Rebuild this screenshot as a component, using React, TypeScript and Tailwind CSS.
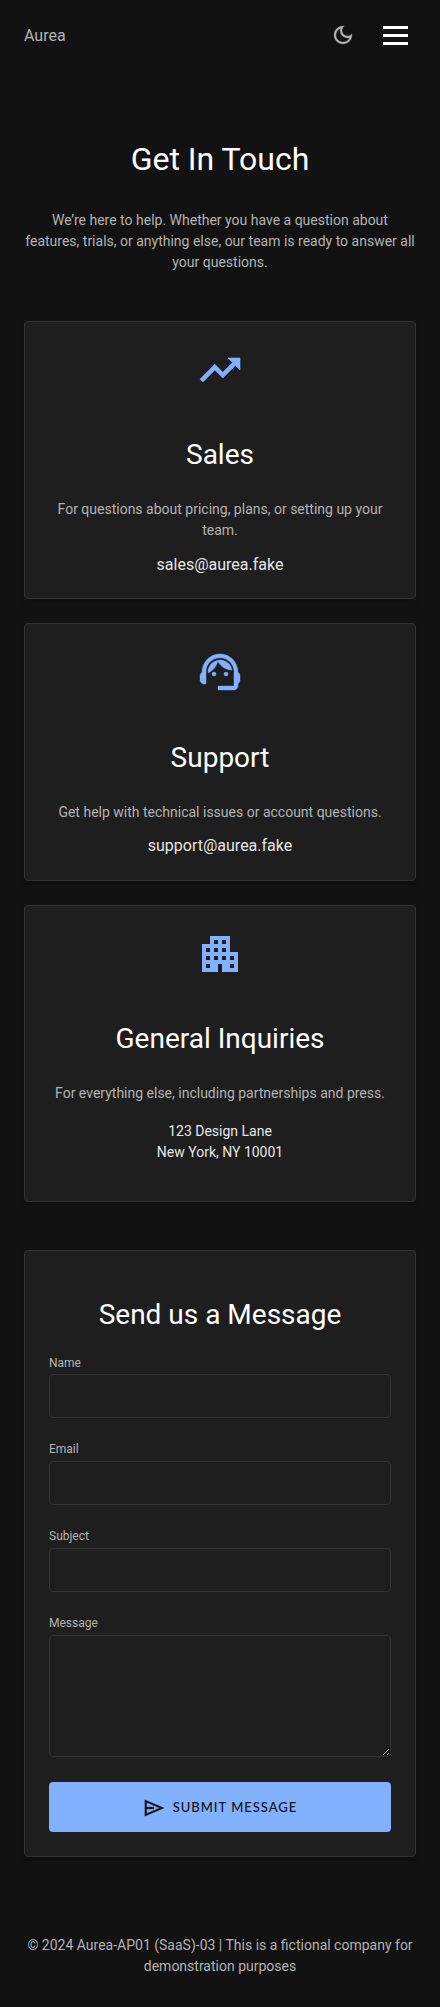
import React from "react";

const Icon = ({ size, className, bold, children }: { size: number; className?: string; bold?: number; children: React.ReactNode }) => (
  <svg
    width={size}
    height={size}
    viewBox="0 0 24 24"
    fill="currentColor"
    stroke={bold ? "currentColor" : "none"}
    strokeWidth={bold ?? 0}
    className={className}
  >
    {children}
  </svg>
);

const cardClass =
  "rounded border border-[#333333] bg-[#1e1e1e] shadow-[0_3px_6px_rgba(0,0,0,0.25)]";

function Field({ label, area }: { label: string; area?: boolean }) {
  return (
    <div className="flex flex-col">
      <label className={`text-[12px] leading-[14.5px] text-[#b3b3b3] ${area ? "mb-[5px]" : "mb-[4px]"}`}>{label}</label>
      {area ? (
        <textarea className="block h-[121.75px] w-full rounded border border-[#333333] bg-[#1e1e1e] outline-none" />
      ) : (
        <input className="block h-[44px] w-full rounded border border-[#333333] bg-[#1e1e1e] outline-none" />
      )}
    </div>
  );
}

export default function App() {
  return (
    <div className="min-h-[2007px] bg-[#121212] font-['Roboto',sans-serif] text-white">
      <header className="flex h-[70px] items-center justify-between px-6">
        <span className="text-[16px] leading-[21px] text-[#b3b3b3]">Aurea</span>
        <div className="flex items-center">
          <Icon size={24} bold={0.2} className="text-[#b3b3b3]">
            <path d="M9.37 5.51c-.18.64-.27 1.31-.27 1.99 0 4.08 3.32 7.4 7.4 7.4.68 0 1.35-.09 1.99-.27C17.45 17.19 14.93 19 12 19c-3.86 0-7-3.14-7-7 0-2.93 1.81-5.45 4.37-6.49zM12 3c-4.97 0-9 4.03-9 9s4.03 9 9 9 9-4.03 9-9c0-.46-.04-.92-.1-1.36-.98 1.37-2.58 2.26-4.4 2.26-2.98 0-5.4-2.42-5.4-5.4 0-1.81.89-3.42 2.26-4.4-.44-.06-.9-.1-1.36-.1z" />
          </Icon>
          <div className="ml-7 mr-2 flex w-[25px] flex-col gap-[5px]">
            <div className="h-[3px] bg-white" />
            <div className="h-[3px] bg-white" />
            <div className="h-[3px] bg-white" />
          </div>
        </div>
      </header>

      <main className="px-6">
        <h1 className="mt-[70px] text-center text-[32px] leading-[38px] font-normal">Get In Touch</h1>
        <p className="mt-[32px] text-center text-[14px] leading-[21px] text-[#b3b3b3]">
          We’re here to help. Whether you have a question about features, trials, or anything else, our team is ready to answer all your questions.
        </p>

        <div className="mt-[48px] flex flex-col gap-6">
          <section className={`${cardClass} flex h-[278px] flex-col items-center px-6 pt-6 text-center`}>
            <Icon size={48} bold={0.3} className="text-[#82b1ff]">
              <path d="M16 6l2.29 2.29-4.88 4.88-4-4L2 16.59 3.41 18l6-6 4 4 6.3-6.29L22 12V6z" />
            </Icon>
            <h2 className="mt-[44px] text-[28px] leading-[34px] font-normal">Sales</h2>
            <p className="mt-[27px] text-[14px] leading-[21px] text-[#b3b3b3]">For questions about pricing, plans, or setting up your team.</p>
            <p className="mt-[12px] text-[16px] leading-[24px] text-[#e6e6e6]">sales@aurea.fake</p>
          </section>

          <section className={`${cardClass} flex h-[258px] flex-col items-center px-6 pt-6 text-center`}>
            <Icon size={48} bold={0.2} className="text-[#82b1ff]">
              <path d="M21 12.22C21 6.73 16.74 3 12 3c-4.69 0-9 3.65-9 9.28-.6.34-1 .98-1 1.72v2c0 1.1.9 2 2 2h1v-6.1c0-3.87 3.13-7 7-7s7 3.13 7 7V19h-8v2h8c1.1 0 2-.9 2-2v-1.22c.59-.31 1-.92 1-1.62v-2.3c0-.7-.41-1.31-1-1.64z" />
              <circle cx="9" cy="13" r="1" />
              <circle cx="15" cy="13" r="1" />
              <path d="M18 11.03C17.52 8.18 15.04 6 12.05 6c-3.03 0-6.29 2.51-6.03 6.45 2.47-1.01 4.33-3.21 4.86-5.89 1.31 2.63 4 4.44 7.12 4.47z" />
            </Icon>
            <h2 className="mt-[45px] text-[28px] leading-[34px] font-normal">Support</h2>
            <p className="mt-[27px] text-[14px] leading-[21px] text-[#b3b3b3]">Get help with technical issues or account questions.</p>
            <p className="mt-[11px] text-[16px] leading-[24px] text-[#e6e6e6]">support@aurea.fake</p>
          </section>

          <section className={`${cardClass} flex h-[297px] flex-col items-center px-6 pt-6 text-center`}>
            <Icon size={48} className="text-[#82b1ff]">
              <path d="M17 11V3H7v4H3v14h8v-4h2v4h8V11h-4zM7 19H5v-2h2v2zm0-4H5v-2h2v2zm0-4H5V9h2v2zm4 4H9v-2h2v2zm0-4H9V9h2v2zm0-4H9V5h2v2zm4 8h-2v-2h2v2zm0-4h-2V9h2v2zm0-4h-2V5h2v2zm4 12h-2v-2h2v2zm0-4h-2v-2h2v2z" />
            </Icon>
            <h2 className="mt-[44px] text-[28px] leading-[34px] font-normal">General Inquiries</h2>
            <p className="mt-[27px] text-[14px] leading-[21px] text-[#b3b3b3]">For everything else, including partnerships and press.</p>
            <p className="mt-[17px] text-[14px] leading-[21px] text-[#e6e6e6]">123 Design Lane<br />New York, NY 10001</p>
          </section>
        </div>

        <section className={`${cardClass} mt-[48px] h-[607px] px-6 pt-[47px]`}>
          <h2 className="text-center text-[28px] leading-[34px] font-normal">Send us a Message</h2>
          <div className="mt-[23.5px] flex flex-col gap-[24.25px]">
            <Field label="Name" />
            <Field label="Email" />
            <Field label="Subject" />
            <Field label="Message" area />
          </div>
          <button className="mt-[25px] flex h-[50px] w-full items-center justify-center gap-[8px] rounded bg-[#82b1ff] pt-[1px] font-['Lato',sans-serif] text-[13px] font-medium tracking-[1px] text-[#121212] uppercase">
            <Icon size={22} bold={0.3}>
              <path fillRule="evenodd" d="M2 3l21 9-21 9zM4 6.05V11h8v2H4v4.95L18 12z" />
            </Icon>
            Submit Message
          </button>
        </section>
      </main>

      <footer className="mt-[78px] px-6 text-center text-[14px] leading-[21px] text-[#b3b3b3]">
        © 2024 Aurea-AP01 (SaaS)-03 | This is a fictional company for demonstration purposes
      </footer>
    </div>
  );
}
